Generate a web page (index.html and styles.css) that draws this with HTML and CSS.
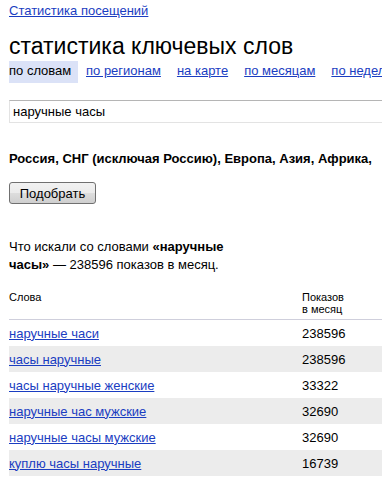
FILE: index.html
```html
<!DOCTYPE html>
<html lang="ru">
<head>
    <meta charset="UTF-8">
    <title>Статистика ключевых слов</title>
    <link rel="stylesheet" href="styles.css">
</head>
<body>
<div class="page">
    <a class="top-link" href="#">Статистика посещений</a>
    <h1>статистика ключевых слов</h1>
    <div class="tabs">
        <span class="tab active">по словам</span>
        <a class="tab" href="#">по регионам</a>
        <a class="tab" href="#">на карте</a>
        <a class="tab" href="#">по месяцам</a>
        <a class="tab" href="#">по неделям</a>
    </div>
    <input class="query" type="text" value="наручные часы">
    <p class="regions">Россия, СНГ (исключая Россию), Европа, Азия, Африка,</p>
    <button class="submit">Подобрать</button>
    <p class="summary">Что искали со словами <b>«наручные часы»</b> — 238596 показов в месяц.</p>
    <table class="words">
        <thead>
            <tr>
                <th>Слова</th>
                <th class="num">Показов<br>в месяц</th>
            </tr>
        </thead>
        <tbody>
            <tr><td><a href="#">наручные часи</a></td><td class="num">238596</td></tr>
            <tr><td><a href="#">часы наручные</a></td><td class="num">238596</td></tr>
            <tr><td><a href="#">часы наручные женские</a></td><td class="num">33322</td></tr>
            <tr><td><a href="#">наручные час мужские</a></td><td class="num">32690</td></tr>
            <tr><td><a href="#">наручные часы мужские</a></td><td class="num">32690</td></tr>
            <tr><td><a href="#">куплю часы наручные</a></td><td class="num">16739</td></tr>
        </tbody>
    </table>
</div>
</body>
</html>
```

FILE: styles.css
```css
body {
    margin: 0;
    font-family: "Liberation Sans", Arial, sans-serif;
    font-size: 13px;
    color: #000;
    background: #fff;
    overflow: hidden;
}
a {
    color: #1a3dc1;
}
.page {
    padding: 3px 0 0 9px;
    width: 460px;
}
.top-link {
    display: inline-block;
    line-height: 16px;
}
h1 {
    font-size: 23px;
    font-weight: normal;
    margin: 13px 0 0;
    line-height: 28px;
}
.tabs {
    display: flex;
    white-space: nowrap;
    margin-top: 1px;
}
.tab {
    padding: 4px 8px 6px 0;
    margin-right: 8px;
    line-height: 12px;
}
.tab.active {
    background: #dbe2f7;
    padding-right: 9px;
    width: 60px;
}
.query {
    display: block;
    box-sizing: border-box;
    width: 420px;
    height: 23px;
    margin-top: 17px;
    padding: 0 3px;
    border: 1px solid #b5b5b5;
    border-bottom-color: #e3e3e3;
    border-left-color: #e3e3e3;
    font: 13px "Liberation Sans", Arial, sans-serif;
}
.regions {
    font-weight: bold;
    margin: 28px 0 0;
    white-space: nowrap;
    line-height: 16px;
}
.submit {
    display: block;
    margin-top: 15px;
    width: 87px;
    height: 22px;
    padding: 0;
    font: 13px "Liberation Sans", Arial, sans-serif;
    border: 1px solid #707070;
    border-radius: 3px;
    background: linear-gradient(#f2f2f2, #ebebeb 50%, #dddddd 51%, #cfcfcf);
}
.summary {
    width: 230px;
    margin: 34px 0 0;
    line-height: 18px;
}
.words {
    width: 373px;
    border-collapse: collapse;
    margin-top: 17px;
}
.words th {
    font-weight: normal;
    font-size: 11px;
    text-align: left;
    vertical-align: top;
    padding: 0 0 4px;
    line-height: 12px;
    border-bottom: 1px solid #cfcfdc;
}
.words td {
    height: 26px;
    padding: 0;
    vertical-align: middle;
}
.words .num {
    width: 80px;
}
.words tbody tr:nth-child(even) td {
    background: #ececec;
}
```
